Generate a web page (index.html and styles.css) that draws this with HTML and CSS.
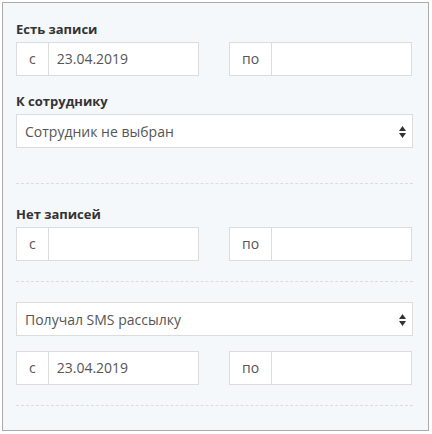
FILE: index.html
```html
<!DOCTYPE html>
<html lang="ru">
<head>
<meta charset="utf-8">
<title>Фильтр</title>
<link rel="stylesheet" href="styles.css">
</head>
<body>
<div class="panel">
  <div class="label">Есть записи</div>
  <div class="row">
    <div class="igroup"><span class="addon">с</span><span class="field">23.04.2019</span></div>
    <div class="igroup"><span class="addon">по</span><span class="field"></span></div>
  </div>
  <div class="label mt15">К сотруднику</div>
  <div class="select"><span>Сотрудник не выбран</span>
    <svg class="arrows" width="7" height="12" viewBox="0 0 7 12"><path d="M3.5 0 L7 5 L0 5 Z M0 7 L7 7 L3.5 12 Z" fill="#333"/></svg>
  </div>
  <div class="hr mt35"></div>
  <div class="label mt20">Нет записей</div>
  <div class="row">
    <div class="igroup"><span class="addon">с</span><span class="field"></span></div>
    <div class="igroup"><span class="addon">по</span><span class="field"></span></div>
  </div>
  <div class="hr mt20"></div>
  <div class="select mt20"><span>Получал SMS рассылку</span>
    <svg class="arrows" width="7" height="12" viewBox="0 0 7 12"><path d="M3.5 0 L7 5 L0 5 Z M0 7 L7 7 L3.5 12 Z" fill="#333"/></svg>
  </div>
  <div class="row mt15">
    <div class="igroup"><span class="addon">с</span><span class="field">23.04.2019</span></div>
    <div class="igroup"><span class="addon">по</span><span class="field"></span></div>
  </div>
  <div class="hr mt20"></div>
</div>
</body>
</html>
```
FILE: styles.css
```css
* { box-sizing: border-box; }
html, body { margin: 0; padding: 0; background: #ffffff; }
body { font-family: "Open Sans", "Liberation Sans", sans-serif; color: #555; }
.panel {
  margin: 2px 0 0 2px;
  width: 427px;
  height: 429px;
  border: 1px solid #ababab;
  background: #f5f8fa;
  padding: 16px 15px 0 13px;
}
.label {
  font-size: 13px;
  font-weight: 700;
  line-height: 18px;
  color: #333;
  margin-bottom: 5px;
  padding-top: 1px;
  height: 18px;
}
.row {
  display: grid;
  grid-template-columns: 183px 183px;
  column-gap: 30px;
}
.igroup {
  display: flex;
  height: 34px;
  border: 1px solid #dcdcdc;
  background: #fff;
}
.addon {
  padding: 0 12px;
  border-right: 1px solid #dcdcdc;
  font-size: 14px;
  line-height: 32px;
  color: #555;
}
.field {
  flex: 1;
  padding: 0 8px;
  font-size: 14px;
  line-height: 32px;
  color: #555;
}
.select {
  display: flex;
  align-items: center;
  justify-content: space-between;
  width: 397px;
  height: 34px;
  border: 1px solid #dcdcdc;
  background: #fff;
  padding: 0 6px 0 8px;
  font-size: 14px;
  color: #555;
}
.arrows { display: block; margin-top: 1px; }
.hr { height: 0; width: 397px; border-top: 1px dashed #dcdcdc; }
.mt15 { margin-top: 15px; }
.mt20 { margin-top: 20px; }
.mt35 { margin-top: 35px; }
```
